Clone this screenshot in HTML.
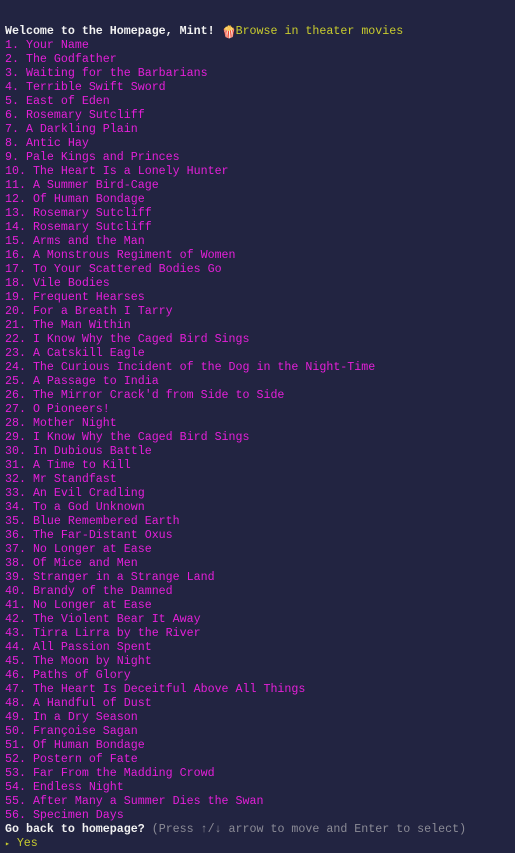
<!DOCTYPE html>
<html><head><meta charset="utf-8"><style>
html,body{margin:0;padding:0;background:#222441;width:515px;height:853px;overflow:hidden}
pre{margin:0;padding:25px 0 0 5px;font-family:"Liberation Mono","DejaVu Sans Mono",monospace;font-size:11.65px;line-height:14px;color:#e51fd9;white-space:pre}
.w{color:#f2f2f2;font-weight:bold}
.y{color:#c9cc2e}
.g{color:#8b8b96}
.e{display:inline-block;width:14px;height:14px;line-height:14px;vertical-align:top;font-family:"DejaVu Sans",sans-serif;font-size:12px;color:#e33}
.l{display:block;height:14px}
</style></head><body><pre><span class="w">Welcome to the Homepage, Mint!</span> <span class="e">🍿</span><span class="y">Browse in theater movies</span>
1. Your Name
2. The Godfather
3. Waiting for the Barbarians
4. Terrible Swift Sword
5. East of Eden
6. Rosemary Sutcliff
7. A Darkling Plain
8. Antic Hay
9. Pale Kings and Princes
10. The Heart Is a Lonely Hunter
11. A Summer Bird-Cage
12. Of Human Bondage
13. Rosemary Sutcliff
14. Rosemary Sutcliff
15. Arms and the Man
16. A Monstrous Regiment of Women
17. To Your Scattered Bodies Go
18. Vile Bodies
19. Frequent Hearses
20. For a Breath I Tarry
21. The Man Within
22. I Know Why the Caged Bird Sings
23. A Catskill Eagle
24. The Curious Incident of the Dog in the Night-Time
25. A Passage to India
26. The Mirror Crack'd from Side to Side
27. O Pioneers!
28. Mother Night
29. I Know Why the Caged Bird Sings
30. In Dubious Battle
31. A Time to Kill
32. Mr Standfast
33. An Evil Cradling
34. To a God Unknown
35. Blue Remembered Earth
36. The Far-Distant Oxus
37. No Longer at Ease
38. Of Mice and Men
39. Stranger in a Strange Land
40. Brandy of the Damned
41. No Longer at Ease
42. The Violent Bear It Away
43. Tirra Lirra by the River
44. All Passion Spent
45. The Moon by Night
46. Paths of Glory
47. The Heart Is Deceitful Above All Things
48. A Handful of Dust
49. In a Dry Season
50. Françoise Sagan
51. Of Human Bondage
52. Postern of Fate
53. Far From the Madding Crowd
54. Endless Night
55. After Many a Summer Dies the Swan
56. Specimen Days
<span class="w">Go back to homepage?</span> <span class="g">(Press ↑/↓ arrow to move and Enter to select)</span>
<span class="y"><span style="font-size:8px">▸</span> Yes</span></pre></body></html>
